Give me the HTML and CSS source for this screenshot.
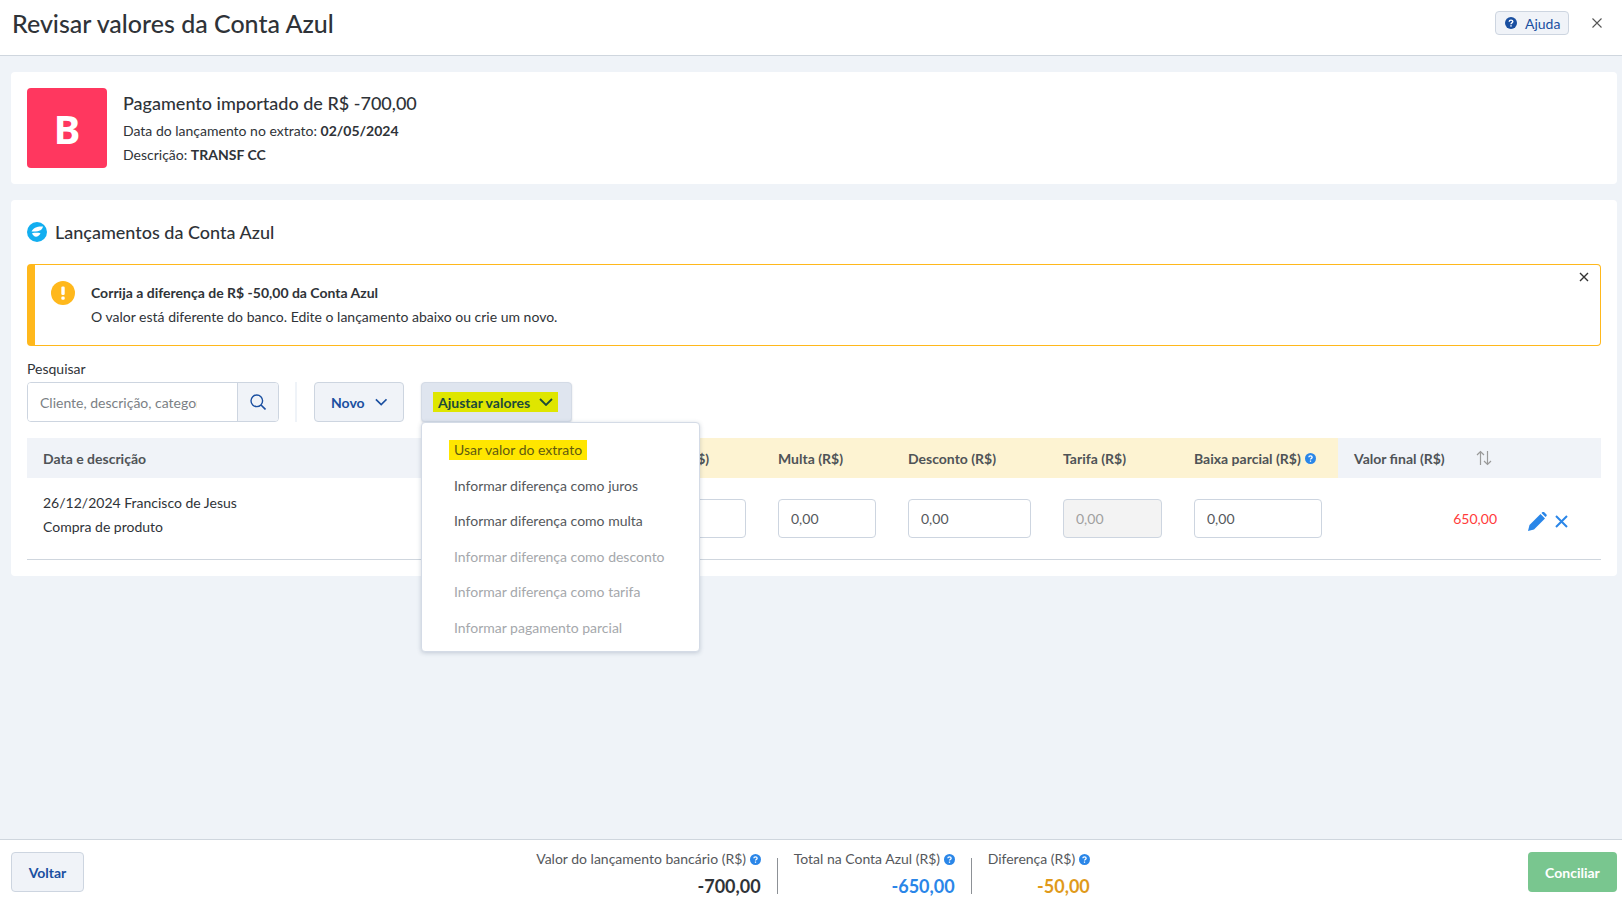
FILE: index.html
```html
<!DOCTYPE html>
<html lang="pt-BR">
<head>
  <meta charset="UTF-8">
  <meta name="viewport" content="width=device-width, initial-scale=1.0">
  <title>Revisar valores da Conta Azul</title>
  <link rel="stylesheet" href="styles.css">
</head>
<body>

  <svg class="sprite" width="0" height="0">
    <symbol id="help" viewBox="0 0 12 12">
      <circle cx="6" cy="6" r="6" fill="currentColor"/>
      <path d="M4.2 4.7c0-1 .8-1.6 1.8-1.6s1.8.6 1.8 1.5c0 1.3-1.8 1.3-1.8 2.6" fill="none" stroke="#fff" stroke-width="1.4"/>
      <rect x="5.3" y="8.2" width="1.4" height="1.4" fill="#fff"/>
    </symbol>
    <symbol id="chevron" viewBox="0 0 14 8">
      <path d="M1 1l6 6 6-6" fill="none" stroke="currentColor" stroke-width="1.8"/>
    </symbol>
  </svg>

  <header class="top-bar">
    <h1>Revisar valores da Conta Azul</h1>
    <div class="top-actions">
      <button class="help-btn">
        <svg class="help-icon-big"><use href="#help"/></svg>
        Ajuda
      </button>
      <svg class="close-icon" viewBox="0 0 10 10"><path d="M.5.5l9 9M9.5.5l-9 9" stroke="#555" stroke-width="1.1" fill="none"/></svg>
    </div>
  </header>

  <main class="content">
    <section class="card import-card">
      <div class="bank-logo">B</div>
      <div class="import-info">
        <h2>Pagamento importado de R$ -700,00</h2>
        <p>Data do lançamento no extrato: <b>02/05/2024</b></p>
        <p>Descrição: <b>TRANSF CC</b></p>
      </div>
    </section>

    <section class="card entries-card">
      <div class="section-head">
        <svg class="ca-logo" viewBox="0 0 20 20">
          <circle cx="10" cy="10" r="10" fill="#12aef0"/>
          <path d="M4.5 9.5C6 6 10.500 4 16 4.500 15.500 8 12 10 4.500 9.500z" fill="#fff"/>
          <path d="M5 11.200c3-.5 6-.4 8.500 0-1 2.300-2.800 3.500-4.500 3.500-1.700 0-3-1.400-4-3.500z" fill="#fff"/>
        </svg>
        <h3>Lançamentos da Conta Azul</h3>
      </div>

      <div class="alert">
        <svg class="alert-icon" viewBox="0 0 24 24">
          <circle cx="12" cy="12" r="12" fill="#ffb81c"/>
          <rect x="10.300" y="5.500" width="3.400" height="8.500" rx="1.200" fill="#fff"/>
          <rect x="10.300" y="15.500" width="3.400" height="3.200" rx="1.200" fill="#fff"/>
        </svg>
        <div>
          <p class="alert-title">Corrija a diferença de R$ -50,00 da Conta Azul</p>
          <p>O valor está diferente do banco. Edite o lançamento abaixo ou crie um novo.</p>
        </div>
        <svg class="alert-close" viewBox="0 0 10 10"><path d="M1 1l8 8M9 1l-8 8" stroke="#333" stroke-width="1.400" fill="none"/></svg>
      </div>

      <div class="toolbar">
        <div class="search-field">
          <label for="search">Pesquisar</label>
          <div class="search-box">
            <input id="search" type="text" placeholder="Cliente, descrição, categoria">
            <button class="search-btn">
              <svg viewBox="0 0 16 16" width="16" height="16"><circle cx="6.800" cy="6.800" r="5.800" fill="none" stroke="#1a4fa0" stroke-width="1.400"/><path d="M11 11l4.500 4.500" stroke="#1a4fa0" stroke-width="1.600"/></svg>
            </button>
          </div>
        </div>
        <div class="toolbar-sep"></div>
        <button class="btn btn-new">Novo <svg class="chevron"><use href="#chevron"/></svg></button>
        <div class="dropdown">
          <button class="btn btn-adjust"><span class="mark-lime">Ajustar valores <svg class="chevron"><use href="#chevron"/></svg></span></button>
          <ul class="menu">
            <li><span class="mark-yellow">Usar valor do extrato</span></li>
            <li>Informar diferença como juros</li>
            <li>Informar diferença como multa</li>
            <li class="disabled">Informar diferença como desconto</li>
            <li class="disabled">Informar diferença como tarifa</li>
            <li class="disabled">Informar pagamento parcial</li>
          </ul>
        </div>
      </div>

      <div class="grid-row grid-head">
        <div class="cell first">Data e descrição</div>
        <div class="cell warn">Juros (R$)</div>
        <div class="cell warn">Multa (R$)</div>
        <div class="cell warn">Desconto (R$)</div>
        <div class="cell warn">Tarifa (R$)</div>
        <div class="cell warn">Baixa parcial (R$) <svg class="help-icon"><use href="#help"/></svg></div>
        <div class="cell final-head">
          Valor final (R$)
          <svg class="sort-icon" viewBox="0 0 16 16"><path d="M4.500 15V1.500M1 5l3.500-3.500L8 5" fill="none" stroke="#9a9a9a" stroke-width="1.200"/><path d="M11.500 1v13.500M8 11l3.500 3.500L15 11" fill="none" stroke="#9a9a9a" stroke-width="1.200"/></svg>
        </div>
        <div class="cell"></div>
      </div>

      <div class="grid-row grid-body">
        <div class="cell first entry-text">
          <p>26/12/2024 Francisco de Jesus</p>
          <p>Compra de produto</p>
        </div>
        <div class="cell"><input class="money" type="text" value="0,00"></div>
        <div class="cell"><input class="money" type="text" value="0,00"></div>
        <div class="cell"><input class="money" type="text" value="0,00"></div>
        <div class="cell"><input class="money" type="text" value="0,00" disabled></div>
        <div class="cell"><input class="money" type="text" value="0,00"></div>
        <div class="cell final-value">650,00</div>
        <div class="cell row-actions">
          <svg width="19" height="19" viewBox="0 0 19 19"><path d="M0 19l1.500-6L12.500 2l4.500 4.500L6 17.500z" fill="#2a86e8"/><path d="M13.500 1l1-1c.5-.3 1-.3 1.500 0l2.500 2.500c.3.5.3 1 0 1.500l-1 1z" fill="#2a86e8"/></svg>
          <svg width="13" height="13" viewBox="0 0 13 13"><path d="M1 1l11 11M12 1L1 12" stroke="#2a86e8" stroke-width="2" fill="none"/></svg>
        </div>
      </div>
    </section>
  </main>

  <footer class="bottom-bar">
    <button class="btn btn-back">Voltar</button>
    <div class="totals">
      <div class="total">
        <span class="total-label">Valor do lançamento bancário (R$) <svg class="help-icon"><use href="#help"/></svg></span>
        <span class="total-value">-700,00</span>
      </div>
      <div class="total">
        <span class="total-label">Total na Conta Azul (R$) <svg class="help-icon"><use href="#help"/></svg></span>
        <span class="total-value blue">-650,00</span>
      </div>
      <div class="total">
        <span class="total-label">Diferença (R$) <svg class="help-icon"><use href="#help"/></svg></span>
        <span class="total-value orange">-50,00</span>
      </div>
    </div>
    <button class="btn-confirm">Conciliar</button>
  </footer>

</body>
</html>
```

FILE: styles.css
```css
* {
  box-sizing: border-box;
}

body {
  font-family: 'Lato', 'Noto Sans', sans-serif;
  font-size: 14px;
  margin: 0;
  height: 100vh;
  display: flex;
  flex-direction: column;
  background-color: #eff3f8;
  color: #2f3338;
  overflow: hidden;
}

p, h1, h2, h3, ul {
  margin: 0;
  padding: 0;
}

button, input {
  font-family: inherit;
}

.sprite {
  position: absolute;
}

.top-bar {
  height: 56px;
  flex: none;
  background: #fff;
  border-bottom: 1px solid #cfd6de;
  display: flex;
  justify-content: space-between;
  align-items: flex-start;
  padding: 5px 20px 0 12px;
}

.top-bar h1 {
  font-size: 25px;
  font-weight: 500;
  line-height: 36px;
}

.top-actions {
  display: flex;
  align-items: center;
  gap: 23px;
  margin-top: 6px;
}

.help-btn {
  width: 74px;
  height: 24px;
  display: flex;
  align-items: center;
  gap: 8px;
  padding: 0 0 0 9px;
  font-size: 14px;
  color: #1a4fa0;
  background: #f0f3f8;
  border: 1px solid #cdd5e0;
  border-radius: 4px;
}

.help-icon-big {
  width: 12px;
  height: 12px;
}

.close-icon {
  width: 10px;
  height: 10px;
}

.help-icon {
  width: 11px;
  height: 11px;
  color: #2a86e8;
  vertical-align: -1px;
}

.content {
  flex: 1;
  padding: 16px 5px 0 11px;
}

.card {
  background: #fff;
  border-radius: 4px;
  padding: 16px;
}

.import-card {
  height: 112px;
  display: flex;
  gap: 16px;
  margin-bottom: 16px;
}

.bank-logo {
  width: 80px;
  height: 80px;
  border-radius: 4px;
  background: #ff375f;
  color: #fff;
  font-family: 'Noto Sans', sans-serif;
  font-size: 40px;
  font-weight: 700;
  display: flex;
  align-items: center;
  justify-content: center;
}

.import-info h2 {
  font-size: 18px;
  font-weight: 500;
  line-height: 24px;
  margin-bottom: 4px;
  margin-top: 3px;
}

.import-info p {
  line-height: 24px;
}

.section-head {
  height: 32px;
  display: flex;
  align-items: center;
  gap: 8px;
  margin-bottom: 16px;
}

.ca-logo {
  width: 20px;
  height: 20px;
}

.section-head h3 {
  font-size: 18px;
  font-weight: 500;
}

.alert {
  position: relative;
  height: 82px;
  display: flex;
  align-items: center;
  gap: 16px;
  padding: 0 0 0 16px;
  border: 1px solid #ffb81c;
  border-left-width: 8px;
  border-radius: 4px;
  line-height: 24px;
}

.alert-icon {
  width: 24px;
  height: 24px;
  margin-top: -24px;
}

.alert-title {
  font-weight: 700;
}

.alert-close {
  position: absolute;
  top: 7px;
  right: 11px;
  width: 10px;
  height: 10px;
}

.toolbar {
  display: flex;
  align-items: flex-end;
  margin-top: 14px;
  margin-bottom: 16px;
}

.search-field label {
  display: block;
  line-height: 18px;
  margin-bottom: 4px;
}

.search-box {
  width: 252px;
  height: 40px;
  display: flex;
  border: 1px solid #cdd5e0;
  border-radius: 4px;
  overflow: hidden;
}

.search-box input {
  flex: 1;
  min-width: 0;
  border: none;
  outline: none;
  font-size: 14px;
  padding: 0 40px 0 12px;
  color: #2f3338;
}

.search-box input::placeholder {
  color: #7b7f85;
}

.search-btn {
  width: 41px;
  border: none;
  border-left: 1px solid #cdd5e0;
  background: #f0f3f8;
  padding: 2px 0 0;
}

.toolbar-sep {
  width: 2px;
  height: 40px;
  margin: 0 17px 0 16px;
  background: #eff3f8;
}

.btn {
  height: 40px;
  font-size: 14px;
  font-weight: 700;
  color: #1a4fa0;
  background: #f0f3f8;
  border: 1px solid #cdd5e0;
  border-radius: 4px;
  display: flex;
  align-items: center;
}

.chevron {
  width: 14px;
  height: 8px;
}

.btn-new {
  width: 90px;
  padding: 0 16px;
  gap: 10px;
  margin-right: 17px;
}

.dropdown {
  position: relative;
}

.btn-adjust {
  width: 151px;
  padding: 0 0 0 11px;
  background: #dfe5ef;
  border-color: #d4dbe6;
  box-shadow: 0 1px 2px rgba(60, 80, 110, 0.2);
}

.mark-lime {
  background: #dfe600;
  color: #1c4a3a;
  height: 20px;
  padding: 0 5px;
  display: flex;
  align-items: center;
  gap: 9px;
}

.menu {
  position: absolute;
  z-index: 5;
  top: 40px;
  left: 0;
  width: 279px;
  height: 230px;
  list-style: none;
  padding: 9px 0 8px;
  background: #fff;
  border: 1px solid #d4dbe6;
  border-radius: 4px;
  box-shadow: 0 1px 4px rgba(60, 80, 110, 0.25);
}

.menu li {
  height: 35.5px;
  line-height: 35.5px;
  padding-left: 32px;
  color: #55585c;
}

.menu li.disabled {
  color: #a5a8ac;
}

.mark-yellow {
  display: inline-block;
  line-height: 20px;
  padding: 0 5px;
  margin-left: -5px;
  background: #ffe600;
  color: #5f5a10;
}

.grid-row {
  display: grid;
  grid-template-columns: 605px 130px 130px 155px 131px 160px 175px 87px;
  align-items: center;
}

.grid-head {
  height: 40px;
  background: #f0f3f8;
  font-weight: 700;
  color: #4f5357;
}

.grid-head .cell {
  height: 100%;
  display: flex;
  align-items: center;
  gap: 4px;
  white-space: nowrap;
}

.cell {
  padding: 0 16px;
}

.cell.warn {
  background: #fdf3d2;
}

.cell.final-head {
  gap: 31px;
}

.sort-icon {
  width: 16px;
  height: 16px;
}

.grid-body {
  height: 82px;
  border-bottom: 1px solid #cfd6de;
}

.entry-text {
  line-height: 24px;
  margin-bottom: 7px;
}

.money {
  width: 100%;
  height: 39px;
  border: 1px solid #cdd5e0;
  border-radius: 4px;
  padding: 0 12px;
  font-size: 14px;
  color: #55585c;
  outline: none;
}

.money:disabled {
  background: #f3f3f3;
  color: #a0a0a0;
}

.final-value {
  text-align: right;
  color: #ff3b3b;
}

.row-actions {
  display: flex;
  align-items: center;
  gap: 8px;
  padding: 5px 0 0 15px;
}

.bottom-bar {
  height: 60px;
  flex: none;
  background: #fff;
  border-top: 1px solid #cfd6de;
  display: flex;
  justify-content: space-between;
  align-items: flex-start;
  padding: 12px 5px 0 11px;
}

.btn-back {
  width: 73px;
  justify-content: center;
}

.btn-confirm {
  width: 89px;
  height: 40px;
  font-size: 14px;
  font-weight: 700;
  color: #fff;
  background: #79c68f;
  border: none;
  border-radius: 4px;
}

.totals {
  display: flex;
  margin-left: 14px;
}

.total {
  display: flex;
  flex-direction: column;
  align-items: flex-end;
  padding: 0 16px;
  position: relative;
}

.total + .total {
  border-left: 1px solid #8d9196;
  height: 36px;
  margin-top: 6px;
}

.total + .total .total-label {
  margin-top: -6px;
}

.total:first-child {
  padding-left: 0;
}

.total:last-child {
  padding-right: 0;
  border-left: 1px solid #8d9196;
}

.total-label {
  line-height: 14px;
  color: #55585c;
  white-space: nowrap;
}

.total-value {
  font-size: 18px;
  font-weight: 700;
  line-height: 24px;
  margin-top: 8px;
}

.total-value.blue {
  color: #2a86e8;
}

.total-value.orange {
  color: #e09a1a;
}
```
